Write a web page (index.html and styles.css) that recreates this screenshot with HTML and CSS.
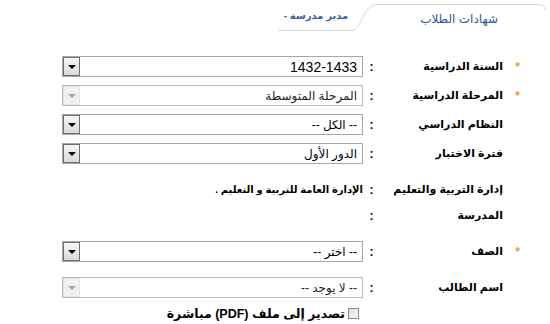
FILE: index.html
```html
<!DOCTYPE html>
<html lang="ar" dir="rtl">
<head>
<meta charset="utf-8">
<link rel="stylesheet" href="styles.css">
</head>
<body>
<div class="page">
  <div class="tabs">
    <svg class="tab-outline" width="550" height="34" viewBox="0 0 550 34">
      <path d="M278 30.5 H352 C362 30.5 362 4.5 378 4.5 H538 Q545 4.5 545.5 10" fill="none" stroke="#d6d6d6" stroke-width="1"/>
    </svg>
    <div class="tab-row">
      <span class="tab active">شهادات الطلاب</span>
      <span class="tab other">مدير مدرسة -</span>
    </div>
  </div>

  <div class="form">
    <div class="row">
      <span class="req">*</span><span class="label">السنة الدراسية</span><span class="colon">:</span>
      <div class="field"><div class="select"><span class="val latin">1432-1433</span><span class="btn"><i class="tri"></i></span></div></div>
    </div>
    <div class="row">
      <span class="req">*</span><span class="label">المرحلة الدراسية</span><span class="colon">:</span>
      <div class="field"><div class="select disabled"><span class="val">المرحلة المتوسطة</span><span class="btn"><i class="tri"></i></span></div></div>
    </div>
    <div class="row">
      <span class="req"></span><span class="label">النظام الدراسي</span><span class="colon">:</span>
      <div class="field"><div class="select"><span class="val">-- الكل --</span><span class="btn"><i class="tri"></i></span></div></div>
    </div>
    <div class="row">
      <span class="req"></span><span class="label">فترة الاختبار</span><span class="colon">:</span>
      <div class="field"><div class="select"><span class="val">الدور الأول</span><span class="btn"><i class="tri"></i></span></div></div>
    </div>
    <div class="row gap-lg">
      <span class="req"></span><span class="label">إدارة التربية والتعليم</span><span class="colon">:</span>
      <div class="field"><span class="text">الإدارة العامة للتربية و التعليم .</span></div>
    </div>
    <div class="row gap-sm">
      <span class="req"></span><span class="label">المدرسة</span><span class="colon">:</span>
      <div class="field"></div>
    </div>
    <div class="row gap-lg">
      <span class="req">*</span><span class="label">الصف</span><span class="colon">:</span>
      <div class="field"><div class="select"><span class="val">-- اختر --</span><span class="btn"><i class="tri"></i></span></div></div>
    </div>
    <div class="row gap-lg">
      <span class="req"></span><span class="label">اسم الطالب</span><span class="colon">:</span>
      <div class="field"><div class="select disabled"><span class="val">-- لا يوجد --</span><span class="btn"><i class="tri"></i></span></div></div>
    </div>
    <div class="row gap-sm">
      <span class="req"></span><span class="label"></span><span class="colon"></span>
      <div class="field"><label class="check"><span class="box"></span><span class="check-text">تصدير إلى ملف (PDF) مباشرة</span></label></div>
    </div>
  </div>
</div>
</body>
</html>
```

FILE: styles.css
```css
html, body {
  margin: 0;
  padding: 0;
  background: #ffffff;
}

body {
  font-family: "Liberation Sans", "DejaVu Sans", sans-serif;
  color: #000;
  direction: rtl;
}

.page {
  width: 550px;
  height: 324px;
  overflow: hidden;
}

.tabs {
  display: grid;
  height: 34px;
}

.tab-outline,
.tab-row {
  grid-area: 1 / 1;
}

.tab-row {
  display: flex;
  align-items: flex-start;
}

.tab {
  white-space: nowrap;
}

.tab.active {
  color: #2c57a6;
  font-size: 12px;
  margin-right: 52px;
  margin-top: 12px;
}

.tab.other {
  color: #3a5ea8;
  font-size: 10px;
  font-weight: bold;
  margin-right: 72px;
  margin-top: 10px;
}

.form {
  display: flex;
  flex-direction: column;
  padding-right: 28px;
  padding-top: 22px;
}

.row {
  display: grid;
  grid-template-columns: 14px 128px 17px 301px;
  align-items: center;
  height: 21px;
}

.row + .row {
  margin-top: 8px;
}

.row.gap-lg {
  margin-top: 15px;
}

.row.gap-sm {
  margin-top: 5px;
}

.req {
  color: #f29a1e;
  font-size: 12px;
  font-weight: bold;
  text-align: right;
  padding-right: 2px;
}

.label {
  font-size: 11px;
  font-weight: bold;
  text-align: right;
  padding-right: 5px;
  white-space: nowrap;
}

.colon {
  font-size: 12px;
  font-weight: bold;
  text-align: center;
}

.field {
  display: flex;
  align-items: center;
  height: 21px;
}

.text {
  font-size: 10px;
  font-weight: bold;
  white-space: nowrap;
}

.select {
  box-sizing: border-box;
  width: 301px;
  height: 21px;
  border: 1px solid #a7a7a7;
  display: flex;
  align-items: center;
  justify-content: space-between;
  background: #fff;
}

.select.disabled {
  border-color: #b9b9b9;
}

.val {
  padding-right: 5px;
  font-size: 12px;
  white-space: nowrap;
}

.val.latin {
  font-size: 14px;
}

.select.disabled .val {
  color: #222;
}

.btn {
  box-sizing: border-box;
  width: 17px;
  height: 19px;
  border: 1px solid #6f6f6f;
  background: linear-gradient(#f6f6f6, #dadada);
  display: flex;
  align-items: center;
  justify-content: center;
}

.select.disabled .btn {
  border-color: #e4e4e4;
  background: #f0f0f0;
}

.tri {
  width: 0;
  height: 0;
  border-left: 4px solid transparent;
  border-right: 4px solid transparent;
  border-top: 4px solid #000;
}

.select.disabled .tri {
  border-top-color: #a8a8a8;
}

.check {
  display: flex;
  align-items: center;
  gap: 3px;
  margin-right: 4px;
}

.box {
  box-sizing: border-box;
  width: 11px;
  height: 11px;
  border: 1px solid #8a8a8a;
  background: linear-gradient(135deg, #e0e0e0, #f8f8f8);
}

.check-text {
  font-size: 12.5px;
  font-weight: bold;
  white-space: nowrap;
}
```
